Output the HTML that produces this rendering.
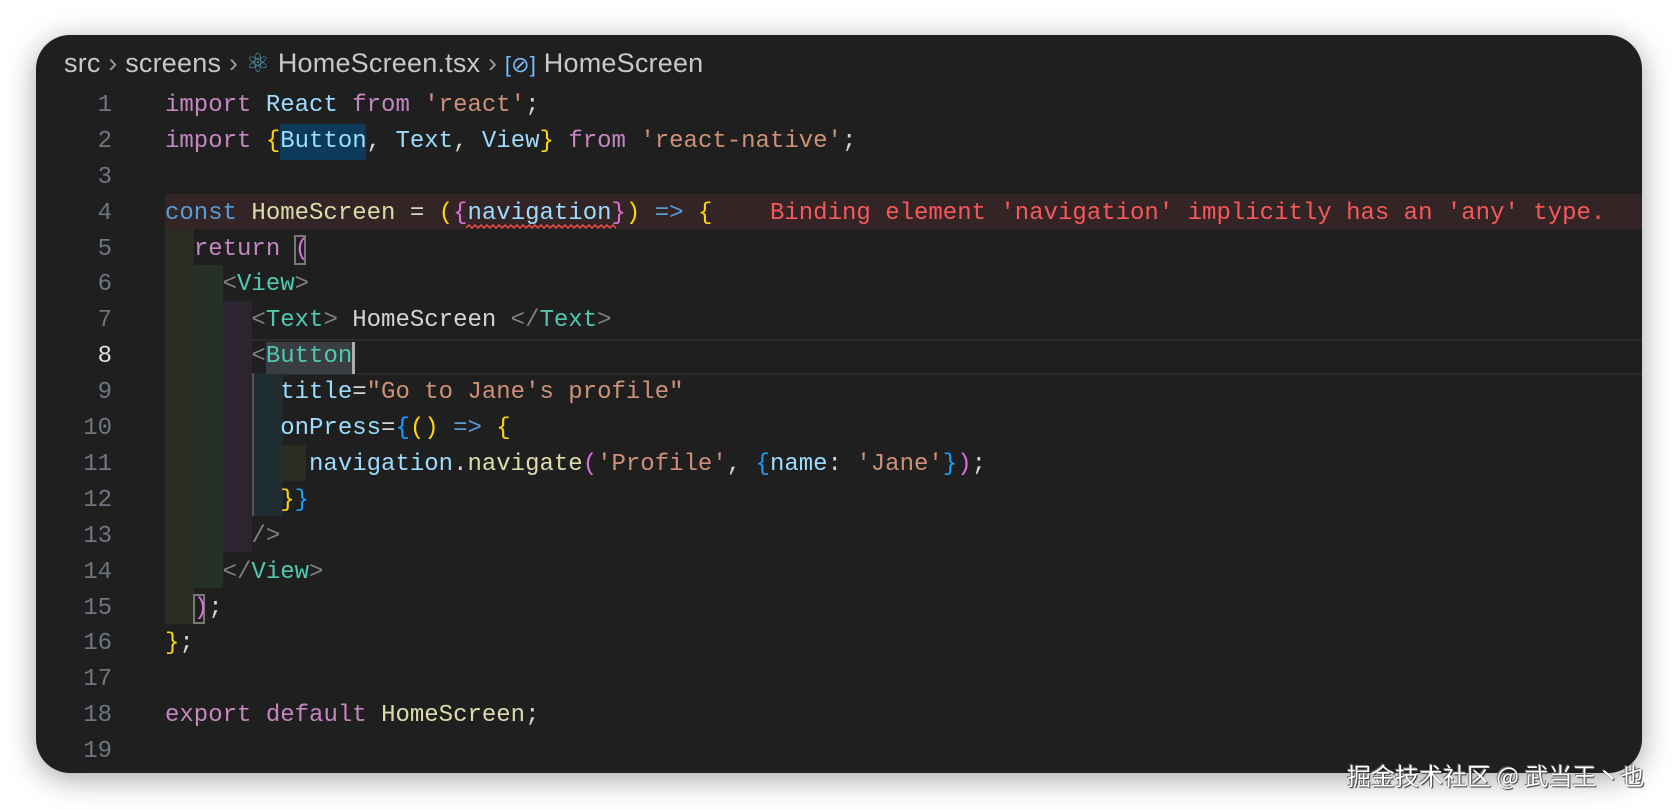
<!DOCTYPE html>
<html><head><meta charset="utf-8"><style>
html,body{margin:0;padding:0;width:1680px;height:810px;background:#fff;overflow:hidden}
.box{position:absolute;left:36px;top:35px;width:1606px;height:738px;background:#1f1f1f;border-radius:34px;box-shadow:0 6px 30px rgba(0,0,0,.35);overflow:hidden}
.bc{position:absolute;left:64px;top:48px;font:27px "Liberation Sans",sans-serif;color:#c8c8c8;white-space:pre;letter-spacing:0.2px}
.ln{position:absolute;left:58px;width:54px;text-align:right;font:24px "Liberation Mono",monospace;color:#6e7681;height:36px;line-height:36px}
.code{position:absolute;left:165px;font:24px "Liberation Mono",monospace;color:#d4d4d4;white-space:pre;height:36px;line-height:36px}
.g{position:absolute;}
.k{color:#c586c0}.v{color:#9cdcfe}.s{color:#ce9178}.y{color:#ffd700}.p{color:#da70d6}.b{color:#179fff}.c{color:#569cd6}.f{color:#dcdcaa}.t{color:#4ec9b0}.a{color:#808080}
.err{color:#f8585a}
.wm{position:absolute;left:1347px;top:757px;font:24px "Noto Sans CJK SC",sans-serif;color:#fff;text-shadow:1px 1px 1px #333,-1px -1px 0 #777;white-space:pre}
</style></head><body>
<div class="box"></div>
<div class="bc">src <span style="color:#999">›</span> screens <span style="color:#999">›</span> <span style="color:#519aba">⚛</span> HomeScreen.tsx <span style="color:#999">›</span> <span style="color:#75beff;font-size:22px">[⊘]</span> HomeScreen</div>

<div class="g" style="left:165px;top:194px;width:1477px;height:35px;background:#332426"></div>
<div class="g" style="left:165px;top:339px;width:1477px;height:32px;border-top:2px solid #2b2b2b;border-bottom:2px solid #2b2b2b"></div>
<div class="g" style="left:165px;top:229px;width:29px;height:395px;background:#2c2c22"></div>
<div class="g" style="left:194px;top:265px;width:29px;height:323px;background:#263026"></div>
<div class="g" style="left:223px;top:301px;width:29px;height:251px;background:#2c2530"></div>
<div class="g" style="left:252px;top:373px;width:29px;height:143px;background:#1f2c30;border-left:2px solid #555"></div>
<div class="g" style="left:281px;top:445px;width:25px;height:36px;background:#2b2b22"></div>
<div class="g" style="left:280px;top:124px;width:86px;height:36px;background:#0d3a58"></div>
<div class="g" style="left:266px;top:342px;width:86px;height:32px;background:#3a3d41;border-right:3px solid #aeafad"></div>
<div class="g" style="left:294px;top:235px;width:12px;height:30px;border:2px solid #777;box-sizing:border-box"></div>
<div class="g" style="left:193px;top:594px;width:12px;height:30px;border:2px solid #777;box-sizing:border-box"></div>
<svg class="g" style="left:466px;top:224px" width="150" height="8"><path d="M0 4 l3 -3 l3 3 l3 -3 l3 3 l3 -3 l3 3 l3 -3 l3 3 l3 -3 l3 3 l3 -3 l3 3 l3 -3 l3 3 l3 -3 l3 3 l3 -3 l3 3 l3 -3 l3 3 l3 -3 l3 3 l3 -3 l3 3 l3 -3 l3 3 l3 -3 l3 3 l3 -3 l3 3 l3 -3 l3 3 l3 -3 l3 3 l3 -3 l3 3 l3 -3 l3 3 l3 -3 l3 3 l3 -3 l3 3 l3 -3 l3 3 l3 -3 l3 3 l3 -3 l3 3 l3 -3 l3 3 l3 -3" stroke="#f14c4c" stroke-width="1.5" fill="none"/></svg>

<div class="ln" style="top:88px">1</div>
<div class="ln" style="top:124px">2</div>
<div class="ln" style="top:160px">3</div>
<div class="ln" style="top:196px">4</div>
<div class="ln" style="top:232px">5</div>
<div class="ln" style="top:267px">6</div>
<div class="ln" style="top:303px">7</div>
<div class="ln" style="top:339px;color:#e0e0e0">8</div>
<div class="ln" style="top:375px">9</div>
<div class="ln" style="top:411px">10</div>
<div class="ln" style="top:447px">11</div>
<div class="ln" style="top:483px">12</div>
<div class="ln" style="top:519px">13</div>
<div class="ln" style="top:555px">14</div>
<div class="ln" style="top:591px">15</div>
<div class="ln" style="top:626px">16</div>
<div class="ln" style="top:662px">17</div>
<div class="ln" style="top:698px">18</div>
<div class="ln" style="top:734px">19</div>

<div class="code" style="top:88px"><span class="k">import</span> <span class="v">React</span> <span class="k">from</span> <span class="s">'react'</span>;</div>
<div class="code" style="top:124px"><span class="k">import</span> <span class="y">{</span><span class="v">Button</span>, <span class="v">Text</span>, <span class="v">View</span><span class="y">}</span> <span class="k">from</span> <span class="s">'react-native'</span>;</div>
<div class="code" style="top:196px"><span class="c">const</span> <span class="f">HomeScreen</span> = <span class="y">(</span><span class="p">{</span><span class="v">navigation</span><span class="p">}</span><span class="y">)</span> <span class="c">=&gt;</span> <span class="y">{</span>    <span class="err">Binding element 'navigation' implicitly has an 'any' type.</span></div>
<div class="code" style="top:232px">  <span class="k">return</span> <span class="p">(</span></div>
<div class="code" style="top:267px">    <span class="a">&lt;</span><span class="t">View</span><span class="a">&gt;</span></div>
<div class="code" style="top:303px">      <span class="a">&lt;</span><span class="t">Text</span><span class="a">&gt;</span> HomeScreen <span class="a">&lt;/</span><span class="t">Text</span><span class="a">&gt;</span></div>
<div class="code" style="top:339px">      <span class="a">&lt;</span><span class="t">Button</span></div>
<div class="code" style="top:375px">        <span class="v">title</span>=<span class="s">"Go to Jane's profile"</span></div>
<div class="code" style="top:411px">        <span class="v">onPress</span>=<span class="b">{</span><span class="y">()</span> <span class="c">=&gt;</span> <span class="y">{</span></div>
<div class="code" style="top:447px">          <span class="v">navigation</span>.<span class="f">navigate</span><span class="p">(</span><span class="s">'Profile'</span>, <span class="b">{</span><span class="v">name</span>: <span class="s">'Jane'</span><span class="b">}</span><span class="p">)</span>;</div>
<div class="code" style="top:483px">        <span class="y">}</span><span class="b">}</span></div>
<div class="code" style="top:519px">      <span class="a">/&gt;</span></div>
<div class="code" style="top:555px">    <span class="a">&lt;/</span><span class="t">View</span><span class="a">&gt;</span></div>
<div class="code" style="top:591px">  <span class="p">)</span>;</div>
<div class="code" style="top:626px"><span class="y">}</span>;</div>
<div class="code" style="top:698px"><span class="k">export</span> <span class="k">default</span> <span class="f">HomeScreen</span>;</div>

<div class="wm">掘金技术社区 @ 武当王丶也</div>
</body></html>
